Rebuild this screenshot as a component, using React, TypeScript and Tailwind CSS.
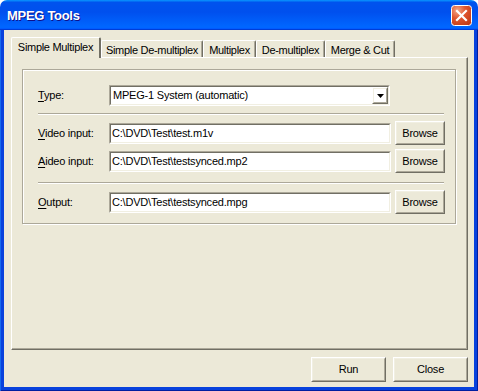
import type { ReactNode } from "react";

const TABS = [
  { label: "Simple Multiplex", w: "w-[90px]", active: true },
  { label: "Simple De-multiplex", w: "w-[102px]" },
  { label: "Multiplex", w: "w-[53px]" },
  { label: "De-multiplex", w: "w-[69px]" },
  { label: "Merge & Cut", w: "w-[70px]" },
];

// classic raised 3d edge (buttons)
function Raised({ className = "", children }: { className?: string; children?: ReactNode }) {
  return (
    <div className={`border border-t-white border-l-white border-r-[#716f64] border-b-[#716f64] ${className}`}>
      <div className="w-full h-full border border-t-[#f1efe2] border-l-[#f1efe2] border-r-[#aca899] border-b-[#aca899] flex items-center justify-center">
        {children}
      </div>
    </div>
  );
}

// classic sunken edge (edit boxes)
function Sunken({ className = "", children }: { className?: string; children?: ReactNode }) {
  return (
    <div className={`border border-t-[#aca899] border-l-[#aca899] border-r-white border-b-white ${className}`}>
      <div className="w-full h-full border border-t-[#716f64] border-l-[#716f64] border-r-[#f1efe2] border-b-[#f1efe2] bg-white flex items-center">
        {children}
      </div>
    </div>
  );
}

function Label({ hot, rest }: { hot: string; rest: string }) {
  return (
    <div className="w-[71px] shrink-0">
      <span className="underline underline-offset-[2px]">{hot}</span>
      {rest}
    </div>
  );
}

function FileRow({ hot, rest, value, className = "" }: { hot: string; rest: string; value: string; className?: string }) {
  return (
    <div className={`flex items-center h-[24px] ${className}`}>
      <Label hot={hot} rest={rest} />
      <Sunken className="w-[282px] h-[21px]">
        <span className="pl-[1px] whitespace-nowrap">{value}</span>
      </Sunken>
      <Raised className="ml-[4px] w-[50px] h-[24px]">Browse</Raised>
    </div>
  );
}

function Separator({ className = "" }: { className?: string }) {
  return <div className={`w-[406px] h-0 border-t border-t-[#aca899] border-b border-b-white ${className}`} />;
}

export default function App() {
  return (
    <div className="w-[478px] h-[391px] flex flex-col bg-white font-['Liberation_Sans',Arial,sans-serif] text-[11px] tracking-[-0.2px] text-black leading-none">
      {/* title bar */}
      <div className="h-[30px] shrink-0 rounded-t-[7px] flex items-center pl-[7px] pr-[6px] bg-[linear-gradient(180deg,#0997ff_0%,#0053ee_8%,#0050ee_40%,#0066ff_88%,#0066ff_93%,#005bff_95%,#003dd7_96%,#003dd7_100%)]">
        <div className="flex-1 text-white font-bold text-[13px] tracking-[-0.3px] [text-shadow:1px_1px_#0f1089]">MPEG Tools</div>
        <svg width="21" height="21" viewBox="0 0 21 21">
          <defs>
            <radialGradient id="xg" cx="0.3" cy="0.25" r="0.9">
              <stop offset="0" stopColor="#f3a88a" />
              <stop offset="0.45" stopColor="#e0562f" />
              <stop offset="1" stopColor="#c23a16" />
            </radialGradient>
          </defs>
          <rect x="0.5" y="0.5" width="20" height="20" rx="3" fill="url(#xg)" stroke="#fff" />
          <path d="M6 6 L15 15 M15 6 L6 15" stroke="#fff" strokeWidth="2.2" strokeLinecap="square" />
        </svg>
      </div>

      {/* frame + client */}
      <div className="flex-1 flex bg-[#0842dd] px-[4px] pb-[4px] shadow-[inset_1px_0_#166aee,inset_-1px_0_#001ea0,inset_0_-1px_#001ea0]">
        <div className="flex-1 bg-[#ece9d8] flex flex-col pt-[7px] pl-[7px] pr-[6px]">
          {/* tabs */}
          <div className="flex items-end h-[20px] tracking-[-0.3px]">
            {TABS.map(t =>
              t.active ? (
                <div
                  key={t.label}
                  className={`${t.w} h-[21px] -mb-px relative z-10 bg-[#ece9d8] rounded-t-[2px] border-t border-l border-t-white border-l-white border-r-2 border-r-[#716f64] flex justify-center pt-[4px]`}
                >
                  <span className="whitespace-nowrap">{t.label}</span>
                </div>
              ) : (
                <div
                  key={t.label}
                  className={`${t.w} h-[17px] rounded-t-[2px] border-t border-l border-t-white border-l-white border-r border-r-[#716f64] shadow-[inset_-1px_0_#aca899] flex justify-center pt-[4px]`}
                >
                  <span className="whitespace-nowrap">{t.label}</span>
                </div>
              )
            )}
          </div>

          {/* tab page */}
          <div className="h-[293px] border border-t-white border-l-white border-r-[#716f64] border-b-[#716f64] shadow-[inset_-1px_-1px_#aca899] pl-[10px] pt-[11px]">
            <div className="w-[434px] h-[155px] border border-[#aca899] shadow-[1px_1px_0_#fff,inset_1px_1px_0_#fff] pl-[15px] pt-[15px]">
              <div className="flex items-center h-[21px]">
                <Label hot="T" rest="ype:" />
                <Sunken className="w-[281px] h-[21px]">
                  <span className="flex-1 pl-[2px] whitespace-nowrap">MPEG-1 System (automatic)</span>
                  <Raised className="w-[16px] h-[17px]">
                    <svg width="7" height="4" viewBox="0 0 7 4">
                      <path d="M0 0 H7 L3.5 4 Z" fill="#000" />
                    </svg>
                  </Raised>
                </Sunken>
              </div>
              <Separator className="mt-[7px]" />
              <FileRow hot="V" rest="ideo input:" value="C:\DVD\Test\test.m1v" className="mt-[6px]" />
              <FileRow hot="A" rest="ideo input:" value="C:\DVD\Test\testsynced.mp2" className="mt-[4px]" />
              <Separator className="mt-[9px]" />
              <FileRow hot="O" rest="utput:" value="C:\DVD\Test\testsynced.mpg" className="mt-[6px]" />
            </div>
          </div>

          {/* bottom buttons */}
          <div className="flex justify-end gap-[7px] mt-[7px]">
            <Raised className="w-[75px] h-[25px]">Run</Raised>
            <Raised className="w-[75px] h-[25px]">Close</Raised>
          </div>
        </div>
      </div>
    </div>
  );
}
